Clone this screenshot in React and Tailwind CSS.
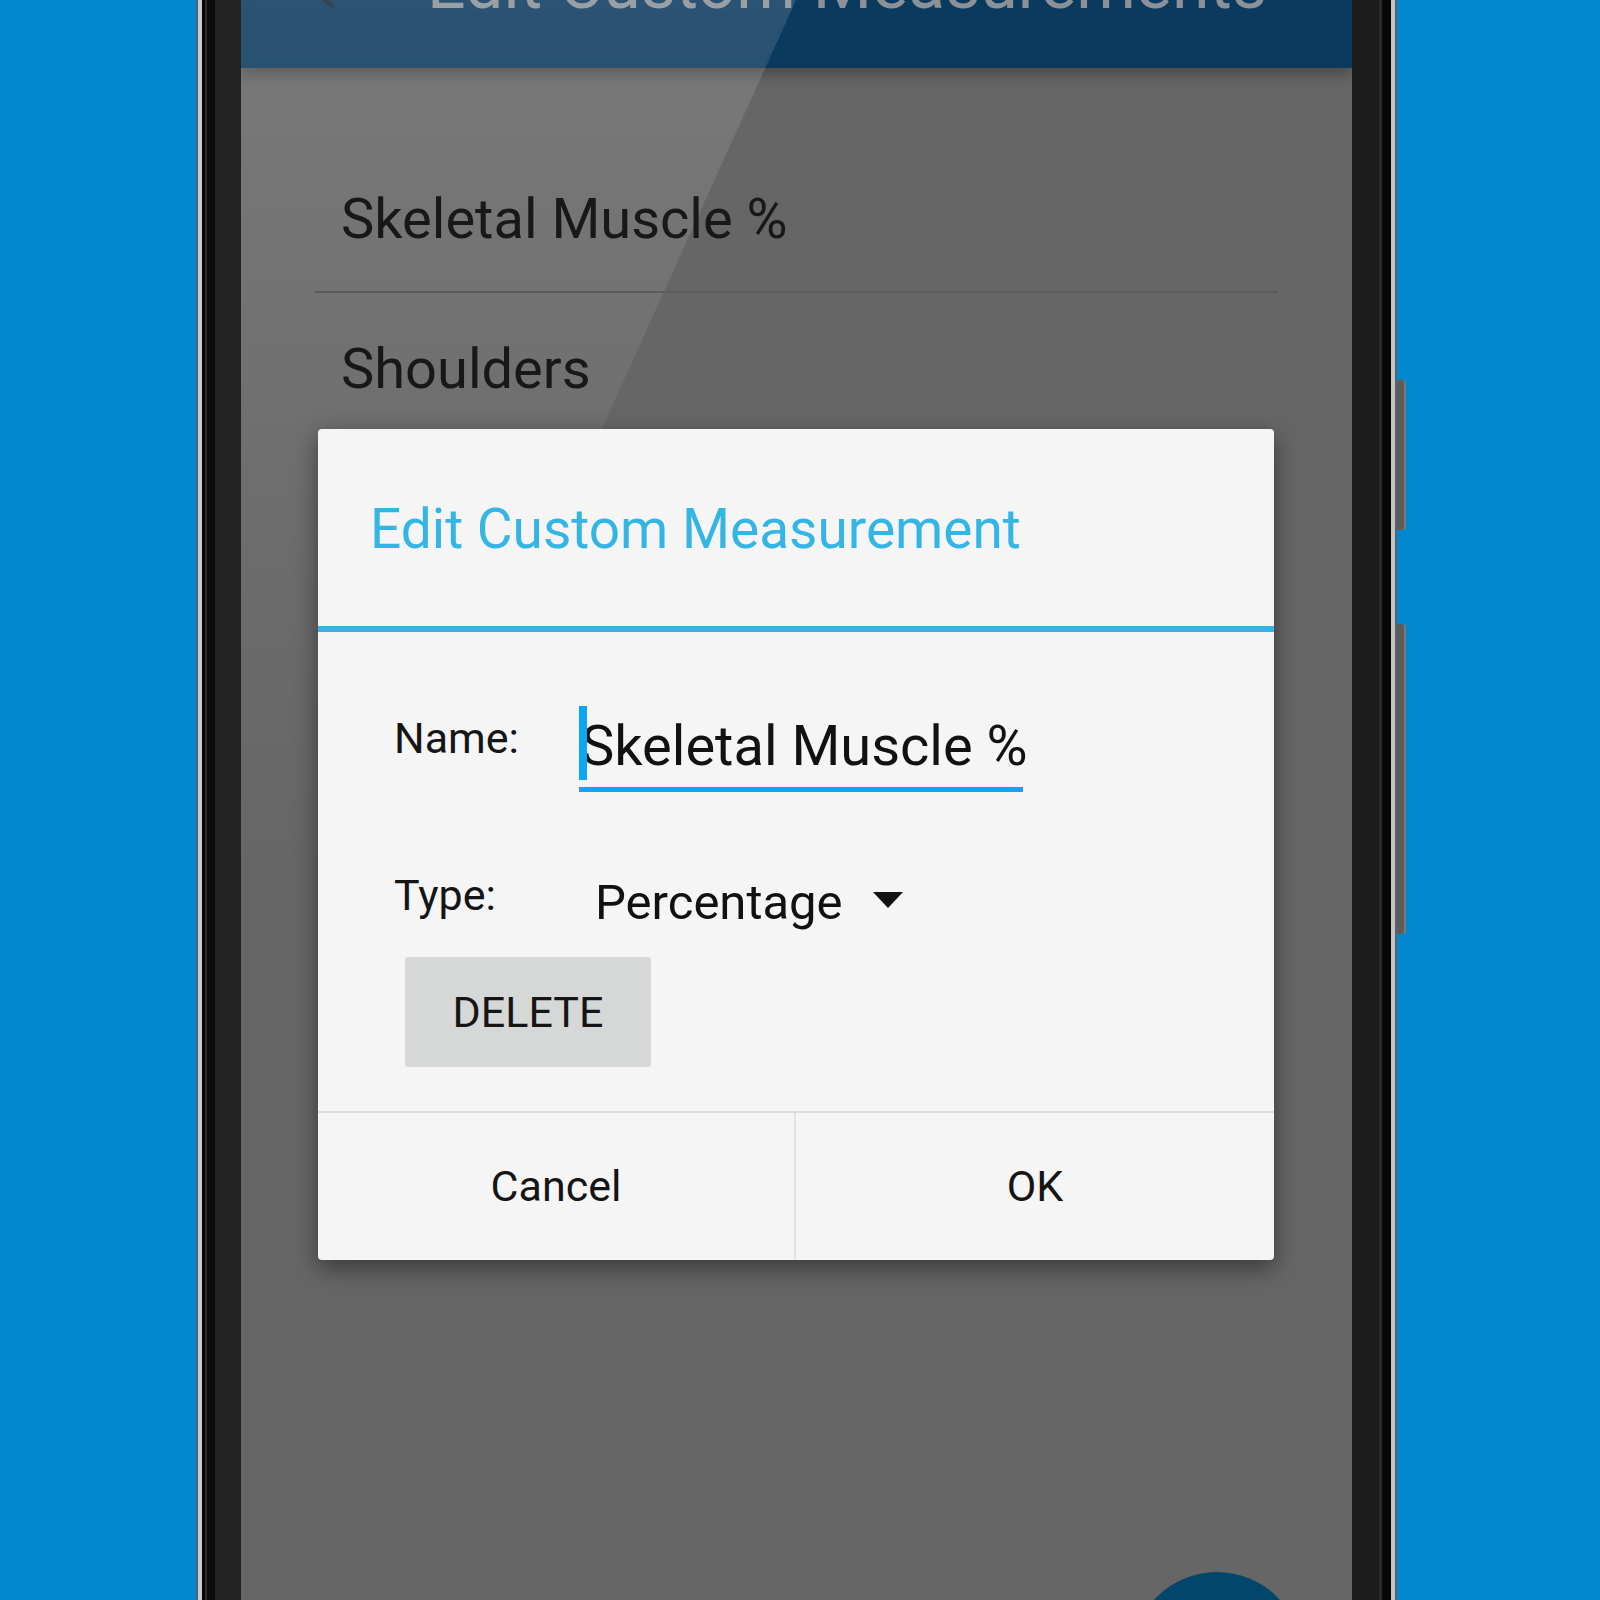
import React from "react";

const labelText = "text-[43px] leading-[43px] text-[#151515]";

const Bezel = ({ lines }) => (
  <div className="w-[45px] shrink-0 flex">
    {lines.map((l, i) => (
      <div key={i} className={l} />
    ))}
  </div>
);

const EditDialog = () => (
  <div className="absolute z-30 left-[77px] top-[429px] w-[956px] h-[831px] rounded-[4px] bg-[#f5f5f5] shadow-[0_8px_24px_rgba(0,0,0,0.45)] flex flex-col">
    <div className="pt-[73px] pl-[52px] text-[55px] leading-[55px] text-[#33b5e5]">
      Edit Custom Measurement
    </div>
    <div className="mt-[69px] h-[6px] bg-[#33b5e5]" />

    <div className="flex pl-[76px] mt-[74px]">
      <div className={`w-[185px] mt-[11px] ${labelText}`}>Name:</div>
      <div className="relative w-[444px] flex flex-col">
        <div className="mt-[12px] pl-[2px] text-[56px] leading-[56px] text-[#111] whitespace-nowrap">
          Skeletal Muscle %
        </div>
        <div className="absolute left-0 top-0 w-[8px] h-[74px] bg-[#0aa8f2]" />
        <div className="mt-[13px] h-[5px] bg-[#0aa8f2]" />
      </div>
    </div>

    <div className="flex items-start pl-[76px] mt-[82px]">
      <div className={`w-[201px] ${labelText}`}>Type:</div>
      <div className="mt-[4px] text-[49px] leading-[49px] text-[#111]">Percentage</div>
      <svg className="ml-[30px] mt-[18px] w-[30px] h-[16px]" viewBox="0 0 30 16">
        <polygon points="0,0 30,0 15,16" fill="#111" />
      </svg>
    </div>

    <div className="mt-[30px] ml-[87px] w-[246px] h-[110px] rounded-[4px] bg-[#d6d7d7] flex items-center justify-center text-[43px] leading-[43px] text-[#151515]">
      DELETE
    </div>

    <div className="mt-auto border-t-2 border-[#dcdcdc] h-[149px] flex text-[43px] leading-[43px] text-[#151515]">
      <div className="w-[478px] border-r-2 border-[#e2e2e2] flex items-center justify-center">
        Cancel
      </div>
      <div className="flex-1 flex items-center justify-center">OK</div>
    </div>
  </div>
);

const Screen = () => (
  <div className="relative w-[1111px] shrink-0 bg-[#666666] overflow-hidden flex flex-col">
    <div className="relative z-10 h-[68px] shrink-0 bg-[#0b3a5f] shadow-[0_6px_14px_rgba(0,0,0,0.3)] flex items-start pl-[80px]">
      <svg className="w-[16px] h-[10px] shrink-0" viewBox="0 0 16 10">
        <path d="M0 -4 L12 7" stroke="#1b2631" strokeWidth="4" />
      </svg>
      <div className="ml-[90px] -mt-[49px] text-[68px] leading-[68px] text-[#8b9197] whitespace-nowrap">
        Edit Custom Measurements
      </div>
    </div>

    <div className="relative z-[25] px-[74px] pt-[123px] text-[56px] leading-[56px] text-[#181818]">
      <div className="pl-[26px]">Skeletal Muscle %</div>
      <div className="mt-[44px] h-[2px] bg-[#5b5b5b]" />
      <div className="pl-[26px] mt-[48px]">Shoulders</div>
    </div>

    {/* light glare across the glass */}
    <div className="absolute inset-0 z-20 pointer-events-none bg-linear-to-b from-white/[0.13] via-white/[0.04] via-35% to-white/0 to-55% [clip-path:polygon(0_0,555px_0,0_1225px)]" />

    <EditDialog />

    <div className="absolute z-30 left-[891px] top-[1572px] w-[170px] h-[170px] rounded-full bg-[#02476b]" />
  </div>
);

export default function App() {
  return (
    <div className="w-[1600px] h-[1600px] overflow-hidden bg-[#0288d1] flex font-['Roboto',sans-serif]">
      <div className="w-[196px] shrink-0" />
      <Bezel
        lines={[
          "w-[2px] bg-[#4f6270]",
          "w-[4px] bg-[#c9c9c9]",
          "w-[3px] bg-[#050505]",
          "w-[2px] bg-[#2d2d2d]",
          "w-[8px] bg-[#0b0b0b]",
          "flex-1 bg-[#232323]",
        ]}
      />
      <Screen />
      <Bezel
        lines={[
          "w-[27px] bg-[#1c1c1c]",
          "w-[3px] bg-[#2a2a2a]",
          "w-[9px] bg-[#070707]",
          "w-[4px] bg-[#c4c4c4]",
          "w-[2px] bg-[#56626c]",
        ]}
      />
      <div className="flex-1 flex flex-col pt-[380px]">
        <div className="w-[9px] h-[150px] rounded-r-[3px] bg-[#5c5c5c] border-r-2 border-[#7a7a7a]" />
        <div className="w-[9px] h-[310px] mt-[94px] rounded-r-[3px] bg-[#5c5c5c] border-r-2 border-[#7a7a7a]" />
      </div>
    </div>
  );
}
